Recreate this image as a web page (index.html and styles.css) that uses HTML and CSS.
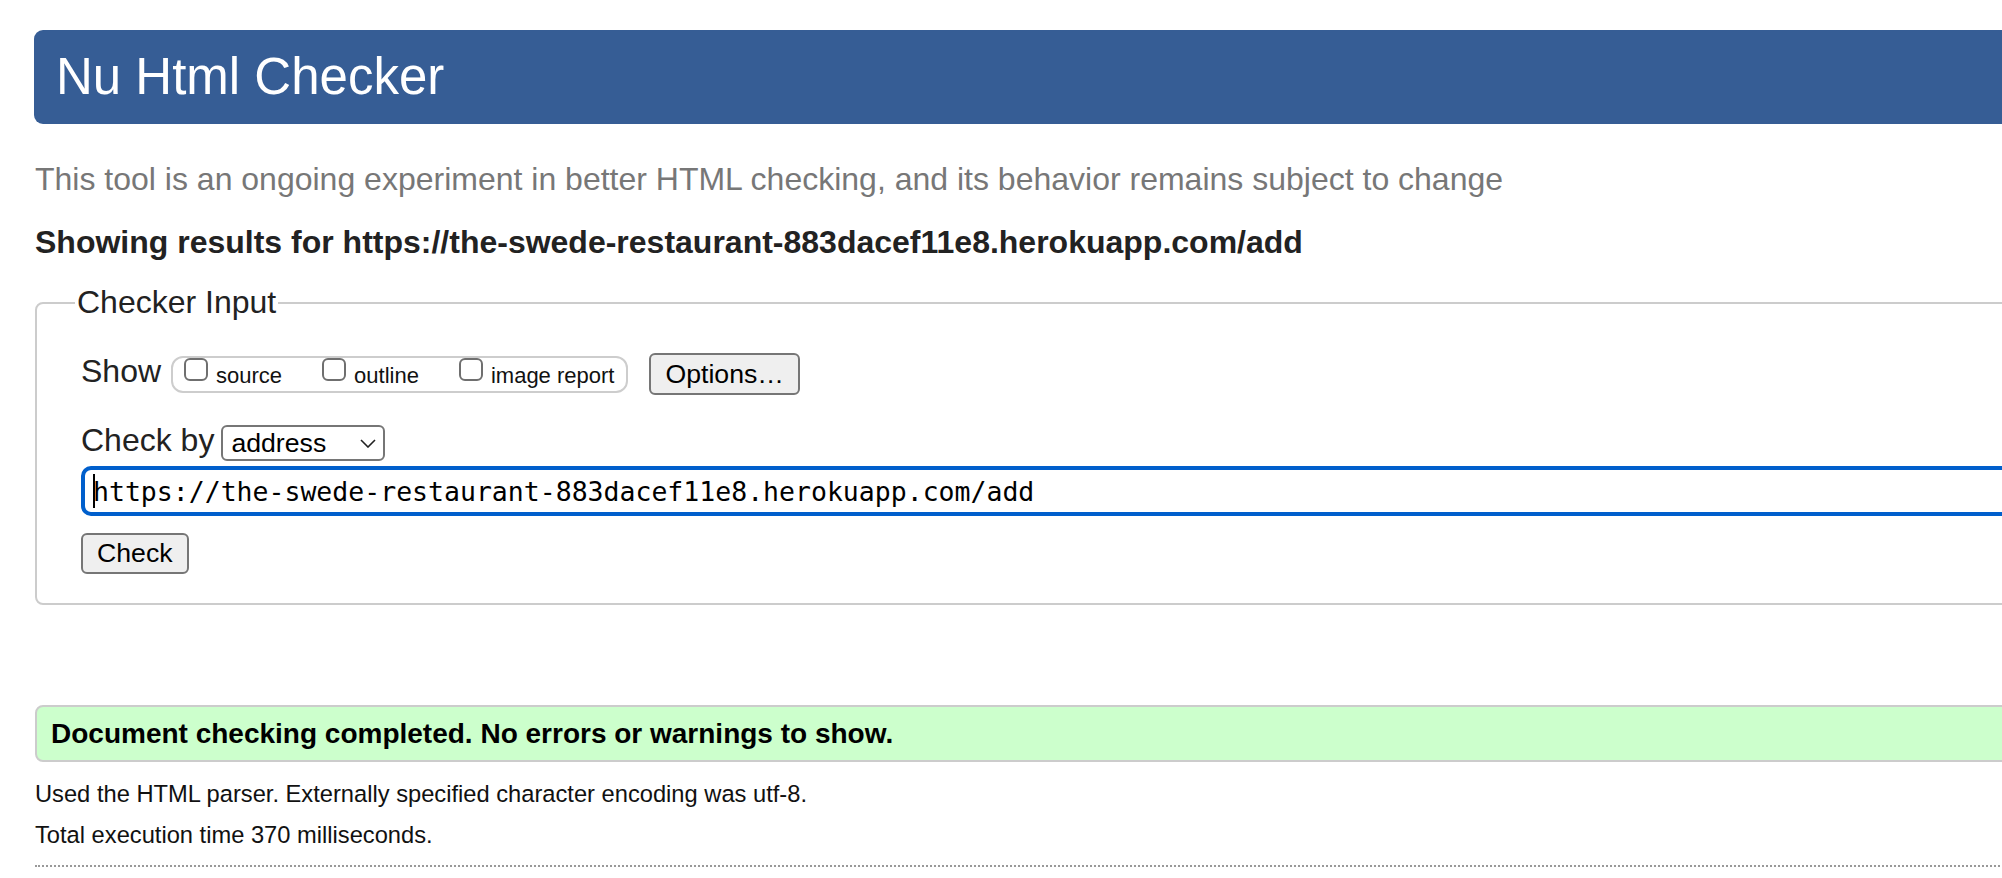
FILE: index.html
```html
<!DOCTYPE html>
<html lang="en">
<head>
<meta charset="utf-8">
<title>Nu Html Checker</title>
<link rel="stylesheet" href="styles.css">
</head>
<body>
<div class="page">
  <header class="masthead"><h1>Nu Html Checker</h1></header>
  <p class="intro">This tool is an ongoing experiment in better HTML checking, and its behavior remains subject to change</p>
  <p class="results">Showing results for https://the-swede-restaurant-883dacef11e8.herokuapp.com/add</p>

  <fieldset class="checker">
    <legend>Checker Input</legend>
    <div class="row row-show">
      <span class="label">Show</span>
      <div class="group">
        <label class="opt"><input type="checkbox" class="cb"><span>source</span></label>
        <label class="opt"><input type="checkbox" class="cb"><span>outline</span></label>
        <label class="opt"><input type="checkbox" class="cb"><span>image report</span></label>
      </div>
      <button class="btn btn-options" type="button">Options…</button>
    </div>
    <div class="row row-by">
      <span class="label">Check by</span>
      <div class="select"><span>address</span><svg class="chev" width="16" height="9" viewBox="0 0 16 9"><polyline points="1,1 8,8 15,1" fill="none" stroke="#222" stroke-width="1.6"/></svg></div>
    </div>
    <div class="url-wrap">
      <input class="url" type="text" value="https://the-swede-restaurant-883dacef11e8.herokuapp.com/add">
      <span class="caret"></span>
    </div>
    <div class="actions"><button class="btn btn-check" type="button">Check</button></div>
  </fieldset>

  <div class="status">Document checking completed. No errors or warnings to show.</div>
  <p class="details">Used the HTML parser. Externally specified character encoding was utf-8.</p>
  <p class="details">Total execution time 370 milliseconds.</p>
  <hr class="sep">
</div>
</body>
</html>
```
FILE: styles.css
```css
html, body {
  margin: 0;
  padding: 0;
  overflow: hidden;
  background: #fff;
}
body {
  font-family: "Liberation Sans", Arial, Helvetica, sans-serif;
  color: #222;
}
.page {
  width: 2200px;
  box-sizing: border-box;
  padding: 30px 0 0 35px;
}
.masthead {
  margin-left: -1px;
  height: 94px;
  background: #365d95;
  border-radius: 9px;
  padding-left: 22px;
}
.masthead h1 {
  margin: 0;
  font-size: 51px;
  font-weight: normal;
  line-height: 94px;
  color: #fff;
}
.intro {
  margin: 37px 0 0;
  font-size: 32px;
  line-height: 37px;
  color: #777;
}
.results {
  margin: 26px 0 0;
  font-size: 32px;
  line-height: 37px;
  font-weight: bold;
  color: #222;
}
.checker {
  margin: 23px 0 0;
  border: 2px solid #ccc;
  border-radius: 8px;
  padding: 32px 0 29px 44px;
  min-width: 0;
}
.checker legend {
  font-size: 32px;
  line-height: 37px;
  padding: 0 2px;
  margin-left: -6px;
  color: #222;
}
.row {
  display: flex;
  align-items: center;
}
.row-show {
  height: 42px;
}
.row-by {
  height: 36px;
  margin-top: 30px;
}
.label {
  font-size: 32px;
  line-height: 37px;
  padding-bottom: 5px;
  color: #222;
}
.group {
  display: flex;
  align-items: flex-end;
  height: 37px;
  box-sizing: border-box;
  margin-left: 10px;
  border: 2px solid #cdcdcd;
  border-radius: 12px;
  padding: 0 12px 4px 11px;
}
.opt {
  display: flex;
  align-items: flex-end;
  gap: 8px;
  font-size: 22px;
  line-height: 22px;
  color: #111;
}
.opt + .opt {
  margin-left: 40px;
}
.cb {
  appearance: none;
  -webkit-appearance: none;
  width: 24px;
  height: 23px;
  margin: 0 0 6px;
  box-sizing: border-box;
  border: 2px solid #6f6f6f;
  border-radius: 6px;
  background: #fff;
}
.btn {
  display: inline-flex;
  align-items: center;
  box-sizing: border-box;
  height: 41px;
  padding: 0 13px;
  border: 2px solid #767676;
  border-radius: 6px;
  background: #efefef;
  font-family: "Liberation Sans", Arial, sans-serif;
  font-size: 26.67px;
  color: #000;
}
.btn-options {
  height: 42px;
  margin-left: 21px;
  padding: 0 14px;
}
.btn-check {
  padding: 0 14px;
}
.select {
  display: flex;
  align-items: center;
  justify-content: space-between;
  box-sizing: border-box;
  width: 164px;
  height: 36px;
  margin-left: 7px;
  padding: 0 7px 0 8px;
  border: 2px solid #767676;
  border-radius: 6px;
  background: #fff;
  font-size: 26.67px;
  color: #000;
}
.chev {
  display: block;
}
.url-wrap {
  position: relative;
  margin-top: 5px;
}
.url {
  display: block;
  width: 100%;
  height: 50px;
  box-sizing: border-box;
  border: 4px solid #005fcc;
  border-radius: 10px;
  padding: 0 0 0 8px;
  font-family: "DejaVu Sans Mono", "Liberation Mono", monospace;
  font-size: 26.5px;
  color: #000;
  background: #fff;
  outline: none;
}
.caret {
  position: absolute;
  left: 12px;
  top: 8px;
  width: 2px;
  height: 34px;
  background: #000;
}
.actions {
  display: flex;
  margin-top: 17px;
}
.status {
  margin-top: 100px;
  border: 2px solid #ccc;
  border-radius: 8px;
  background: #ccffcc;
  padding: 10px 14px;
  font-size: 28px;
  line-height: 33px;
  font-weight: bold;
  color: #000;
}
.details {
  margin: 0;
  font-size: 23.7px;
  line-height: 41px;
  color: #111;
}
.status + .details {
  margin-top: 12px;
}
.sep {
  margin: 9px 0 0;
  border: 0;
  border-top: 2px dotted #999;
  height: 0;
}
```
